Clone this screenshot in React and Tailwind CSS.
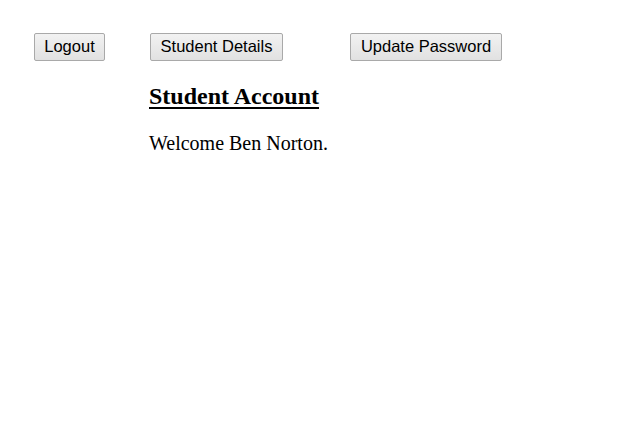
export default function App() {
  const btn =
    "h-[28px] pb-[2px] border border-[#a9a9a9] rounded-[2px] bg-gradient-to-b from-[#f2f2f2] to-[#e1e1e1] text-[16.5px] text-black leading-none text-center font-['Liberation_Sans',Arial,sans-serif]";
  return (
    <div className="w-[626px] h-[421px] bg-white">
      <div className="flex pt-[33px]">
        <button className={btn + " w-[71px] ml-[34px]"}>Logout</button>
        <button className={btn + " w-[133px] ml-[45px]"}>Student Details</button>
        <button className={btn + " w-[152px] ml-[67px]"}>Update Password</button>
      </div>
      <div className="pl-[149px] font-['Liberation_Serif','Times_New_Roman',serif] text-black">
        <h2 className="mt-[21px] text-[24px] font-bold underline leading-[28px] underline-offset-[3px]">
          Student Account
        </h2>
        <p className="mt-[22px] text-[20px] leading-[22px]">Welcome Ben Norton.</p>
      </div>
    </div>
  );
}
